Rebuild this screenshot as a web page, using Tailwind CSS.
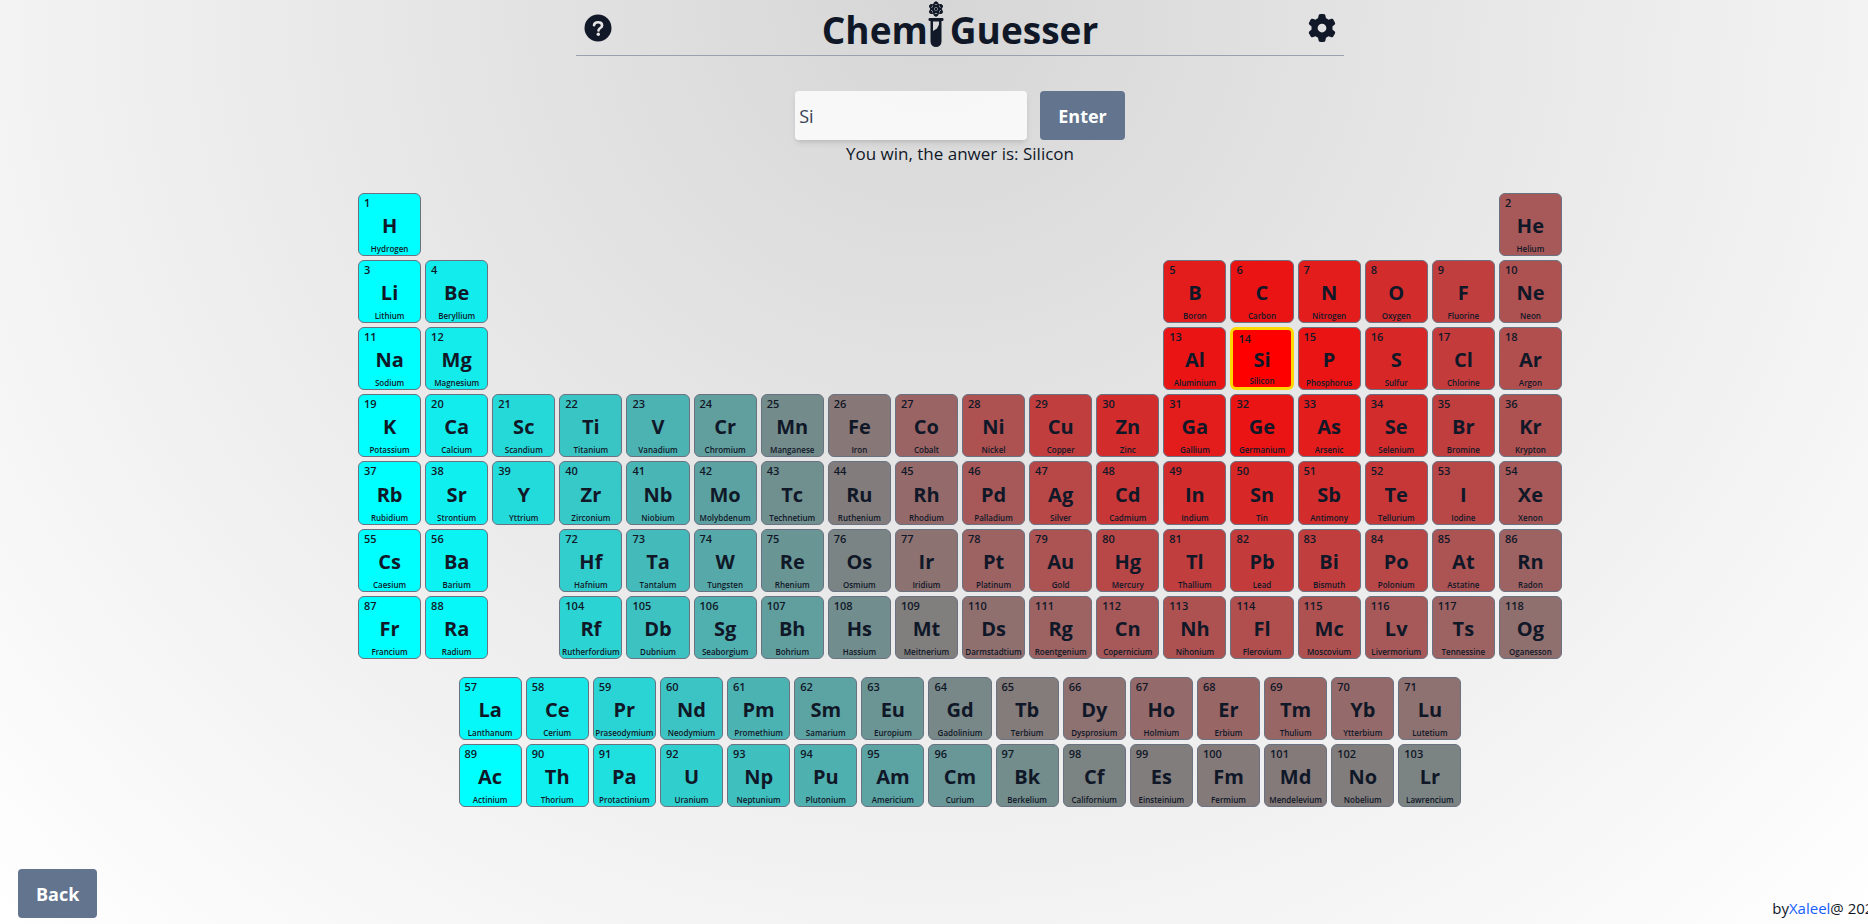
<!DOCTYPE html>
<html lang="en">
<head>
<meta charset="utf-8">
<meta name="viewport" content="width=device-width, initial-scale=1">
<title>Chemi Guesser</title>
<script src="https://cdn.jsdelivr.net/npm/@tailwindcss/browser@4"></script>
</head>
<body class="min-h-screen overflow-x-hidden bg-[radial-gradient(ellipse_at_top,#d6d6d6,#ffffff)] font-['Open_Sans',sans-serif] text-gray-900">
<div class="flex min-h-screen flex-col">
  <div class="flex flex-col items-center pl-13">
    <header class="flex h-14 w-full max-w-3xl items-center justify-between border-b border-gray-400 px-2">
      <button type="button" aria-label="Help" class="flex size-7 items-center justify-center">
        <svg class="size-7" viewBox="0 0 28 28"><circle cx="14" cy="14" r="13.5" fill="#111827"/><path d="M10 11.2C10.3 9 11.8 8.3 14 8.3c2.4 0 4.100 1.100 4.100 3.100 0 2.600-3.600 2.500-3.600 5" fill="none" stroke="#e5e5e5" stroke-width="2.600" stroke-linecap="round"/><circle cx="14.300" cy="20.300" r="1.700" fill="#e5e5e5"/></svg>
      </button>
      <h1 class="flex items-start self-start text-[37px] leading-[60px] font-bold">
        <span>Chem</span>
        <svg role="img" aria-label="i" class="h-12 w-4" viewBox="0 0 16 48" fill="none" stroke="#111827">
          <g stroke-width="1.500"><ellipse cx="8" cy="9" rx="2.600" ry="6.700"/><ellipse cx="8" cy="9" rx="2.600" ry="6.700" transform="rotate(60 8 9)"/><ellipse cx="8" cy="9" rx="2.600" ry="6.700" transform="rotate(120 8 9)"/></g>
          <g fill="#111827" stroke="none"><circle cx="8" cy="9" r="1.500"/><circle cx="8" cy="3" r="1.600"/><circle cx="8" cy="15" r="1.600"/><circle cx="2.800" cy="6" r="1.600"/><circle cx="13.200" cy="6" r="1.600"/><circle cx="2.800" cy="12" r="1.600"/><circle cx="13.200" cy="12" r="1.600"/>
          <rect x="0.500" y="18" width="15" height="3" rx="1.200"/>
          <path fill-rule="evenodd" d="M2.500 20h11v21.500a5.500 5.500 0 0 1-11 0zM5 21.500v9.500l4-2.500 2-4v-3z"/></g>
        </svg>
        <span class="ml-1.5">Guesser</span>
      </h1>
      <button type="button" aria-label="Settings" class="flex size-7 items-center justify-center">
        <svg class="size-7" viewBox="0 0 512 512" fill="#111827"><path d="M495.900 166.600c3.200 8.700 .5 18.400-6.400 24.600l-43.300 39.400c1.100 8.300 1.700 16.800 1.700 25.400s-.6 17.100-1.700 25.400l43.300 39.400c6.900 6.200 9.600 15.900 6.400 24.600c-4.400 11.900-9.700 23.300-15.800 34.300l-4.700 8.100c-6.600 11-14 21.400-22.100 31.200c-5.900 7.200-15.700 9.600-24.500 6.800l-55.700-17.700c-13.400 10.300-28.200 18.900-44 25.400l-12.500 57.100c-2 9.100-9 16.300-18.200 17.800c-13.800 2.300-28 3.500-42.500 3.500s-28.700-1.200-42.500-3.500c-9.200-1.500-16.200-8.700-18.200-17.800l-12.500-57.100c-15.800-6.500-30.600-15.100-44-25.400L83.100 425.900c-8.800 2.800-18.600 .3-24.500-6.800c-8.100-9.800-15.500-20.200-22.100-31.200l-4.700-8.100c-6.100-11-11.400-22.400-15.800-34.300c-3.200-8.700-.5-18.400 6.400-24.600l43.300-39.400C64.600 273.100 64 264.600 64 256s.6-17.100 1.700-25.400L22.400 191.200c-6.900-6.200-9.600-15.900-6.400-24.600c4.400-11.900 9.700-23.300 15.800-34.300l4.700-8.100c6.600-11 14-21.400 22.100-31.200c5.900-7.200 15.700-9.600 24.500-6.800l55.700 17.700c13.400-10.300 28.200-18.900 44-25.400l12.500-57.100c2-9.100 9-16.300 18.200-17.800C227.300 1.200 241.500 0 256 0s28.700 1.200 42.500 3.500c9.200 1.500 16.200 8.700 18.200 17.800l12.500 57.100c15.800 6.500 30.600 15.100 44 25.400l55.700-17.700c8.800-2.800 18.600-.3 24.500 6.800c8.100 9.800 15.500 20.200 22.100 31.200l4.700 8.100c6.100 11 11.400 22.400 15.800 34.300zM256 336a80 80 0 1 0 0-160 80 80 0 1 0 0 160z"/></svg>
      </button>
    </header>

    <form class="mt-[35px] flex gap-[13px]" onsubmit="return false">
      <input aria-label="Element guess" type="text" value="Si" class="h-[49px] w-58 rounded bg-white/80 px-1 text-lg text-gray-700 shadow-md">
      <button type="submit" class="h-[49px] rounded bg-slate-500 px-[18px] text-lg font-bold text-white">Enter</button>
    </form>
    <p class="text-[17px] leading-7">You win, the anwer is: Silicon</p>

    <main class="mt-[25px] w-full max-w-[1204px]">
      <div id="table" class="grid grid-cols-18 gap-1"></div>
      <div id="fblock" class="mx-auto mt-[18px] grid w-[83.3%] grid-cols-15 gap-1"></div>
    </main>
  </div>

  <footer class="mt-auto flex items-end justify-between pb-1.5 pl-[18px]">
    <button type="button" class="h-[49px] rounded bg-slate-500 px-[18px] text-lg font-bold text-white">Back</button>
    <p class="-mr-3.5 whitespace-nowrap text-[15px] leading-5">by<a href="#" class="text-blue-600">Xaleel</a>@ 2022</p>
  </footer>
</div>

<script>
const elements = ("H Hydrogen,He Helium,Li Lithium,Be Beryllium,B Boron,C Carbon,N Nitrogen,O Oxygen,F Fluorine,Ne Neon," +
"Na Sodium,Mg Magnesium,Al Aluminium,Si Silicon,P Phosphorus,S Sulfur,Cl Chlorine,Ar Argon,K Potassium,Ca Calcium," +
"Sc Scandium,Ti Titanium,V Vanadium,Cr Chromium,Mn Manganese,Fe Iron,Co Cobalt,Ni Nickel,Cu Copper,Zn Zinc," +
"Ga Gallium,Ge Germanium,As Arsenic,Se Selenium,Br Bromine,Kr Krypton,Rb Rubidium,Sr Strontium,Y Yttrium,Zr Zirconium," +
"Nb Niobium,Mo Molybdenum,Tc Technetium,Ru Ruthenium,Rh Rhodium,Pd Palladium,Ag Silver,Cd Cadmium,In Indium,Sn Tin," +
"Sb Antimony,Te Tellurium,I Iodine,Xe Xenon,Cs Caesium,Ba Barium,La Lanthanum,Ce Cerium,Pr Praseodymium,Nd Neodymium," +
"Pm Promethium,Sm Samarium,Eu Europium,Gd Gadolinium,Tb Terbium,Dy Dysprosium,Ho Holmium,Er Erbium,Tm Thulium,Yb Ytterbium," +
"Lu Lutetium,Hf Hafnium,Ta Tantalum,W Tungsten,Re Rhenium,Os Osmium,Ir Iridium,Pt Platinum,Au Gold,Hg Mercury," +
"Tl Thallium,Pb Lead,Bi Bismuth,Po Polonium,At Astatine,Rn Radon,Fr Francium,Ra Radium,Ac Actinium,Th Thorium," +
"Pa Protactinium,U Uranium,Np Neptunium,Pu Plutonium,Am Americium,Cm Curium,Bk Berkelium,Cf Californium,Es Einsteinium,Fm Fermium," +
"Md Mendelevium,No Nobelium,Lr Lawrencium,Rf Rutherfordium,Db Dubnium,Sg Seaborgium,Bh Bohrium,Hs Hassium,Mt Meitnerium,Ds Darmstadtium," +
"Rg Roentgenium,Cn Copernicium,Nh Nihonium,Fl Flerovium,Mc Moscovium,Lv Livermorium,Ts Tennessine,Og Oganesson").split(",").map(e => e.split(" "));

const ANSWER = 14, ANSWER_COL = 14, ANSWER_ROW = 3, REACH = 13;

// Red next to the answer, fading to cyan with distance.
function heat(x, y) {
  const t = Math.min(1, Math.hypot(x - ANSWER_COL, y - ANSWER_ROW) / REACH);
  const r = Math.round(255 * (1 - t)), c = Math.round(255 * t);
  return `rgb(${r},${c},${c})`;
}
function tile(n, col, row, x, y) {
  const [symbol, name] = elements[n - 1];
  const b = document.createElement("button");
  b.type = "button";
  b.className = n === ANSWER
    ? "flex aspect-square min-w-0 flex-col justify-between rounded-md border-3 border-[#ffd700] leading-none"
    : "flex aspect-square min-w-0 flex-col justify-between rounded-md border border-gray-500 leading-none";
  b.style.cssText = `grid-column:${col};grid-row:${row};background-color:${heat(x, y)}`;
  b.innerHTML = `<span class="pt-[3px] pl-[5px] text-left text-[11px] leading-3 font-semibold">${n}</span>
    <span class="text-center text-xl leading-6 font-bold">${symbol}</span>
    <span class="flex justify-center text-[8px] leading-3 font-semibold">${name}</span>`;
  return b;
}
const table = document.getElementById("table"), fblock = document.getElementById("fblock");
const rows = [[1, 1], [3, 2], [11, 3], [19, 4], [37, 5], [55, 6], [87, 7]];
for (const [first, row] of rows) {
  const last = { 1: 2, 2: 10, 3: 18, 4: 36, 5: 54, 6: 86, 7: 118 }[row];
  for (let n = first; n <= last; n++) {
    if ((n >= 57 && n <= 71) || (n >= 89 && n <= 103)) continue;
    const lead = n - first + 1;
    const isLeft = row === 1 ? n === 1 : lead <= 2;
    const col = isLeft ? lead : 18 - (last - n);
    table.append(tile(n, col, row, col, row));
  }
}
for (let i = 0; i < 15; i++) fblock.append(tile(57 + i, i + 1, 1, i + 2.5, 8.2));
for (let i = 0; i < 15; i++) fblock.append(tile(89 + i, i + 1, 2, i + 2.5, 9.2));
</script>
</body>
</html>
